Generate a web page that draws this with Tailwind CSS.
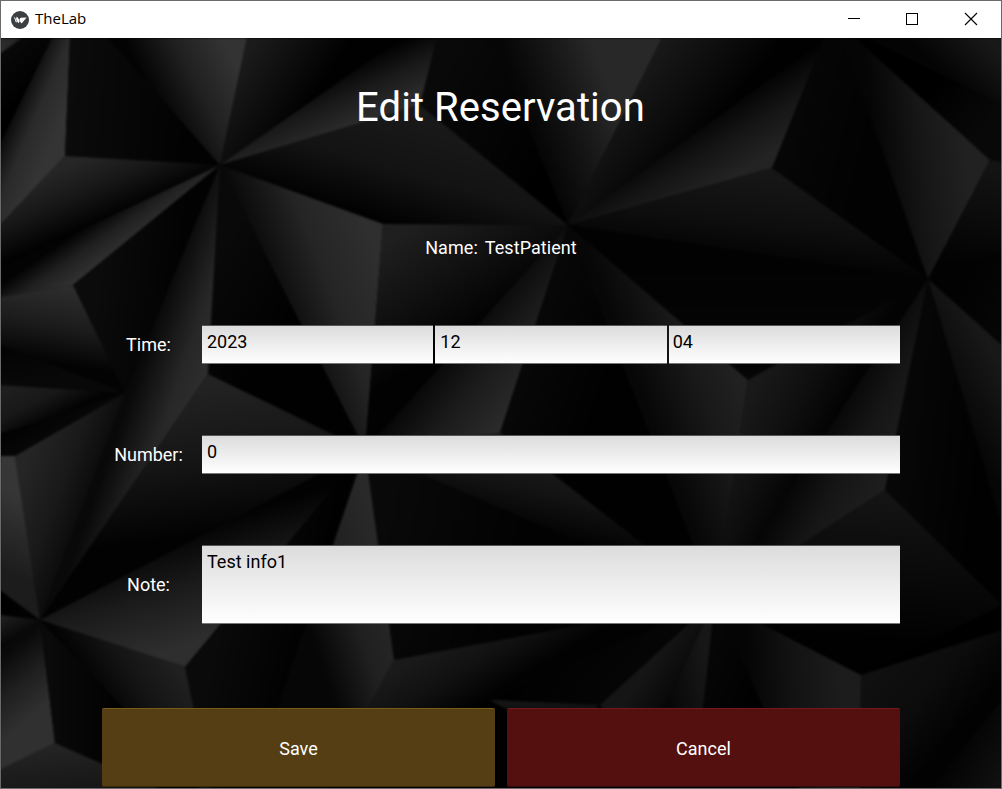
<!DOCTYPE html>
<html lang="en">
<head>
<meta charset="utf-8">
<title>TheLab</title>
<script src="https://cdn.jsdelivr.net/npm/@tailwindcss/browser@4"></script>
</head>
<body class="overflow-hidden bg-black">
<div class="relative flex h-[789px] w-[1002px] flex-col overflow-hidden border border-[#6b6b6b] bg-black font-[Roboto,sans-serif] text-[18px] leading-[22px] text-white">
  <svg class="absolute -top-px -left-px h-[789px] w-[1002px]" viewBox="0 0 1002 789" aria-hidden="true">
    <defs><filter id="soft" x="0" y="0" width="100%" height="100%" color-interpolation-filters="sRGB"><feGaussianBlur stdDeviation="1.3"/></filter></defs>
    <g id="facets" filter="url(#soft)"></g>
  </svg>

  <header class="relative flex h-[37px] shrink-0 items-center bg-white text-black">
    <svg class="ml-[10px] size-[18px]" viewBox="0 0 18 18"><circle cx="9" cy="9" r="9" fill="#3c3f42"/><path d="M2.600 5.200 4.900 8.100 5.900 5.600 8.300 8.700 9.500 6.800 15.600 6.600 10.600 12.400 8.700 10 7.800 12.300 5.900 10.300 5.100 12Z" fill="#fff"/><path d="M4.900 8.100 5.900 10.300M8.300 8.700 8.700 10" stroke="#3c3f42" stroke-width=".5"/></svg>
    <span class="mb-[3px] ml-[6px] font-['Open_Sans',sans-serif] text-[15px] leading-5">TheLab</span>
    <div class="ml-auto flex items-center">
      <svg class="h-[37px] w-[58px]" viewBox="0 0 58 37" fill="none" stroke="#000" shape-rendering="crispEdges"><path d="M23 17.500H35"/></svg>
      <svg class="h-[37px] w-[59px]" viewBox="0 0 59 37" fill="none" stroke="#000" shape-rendering="crispEdges"><path d="M23.500 12.500H34.500V23.500H23.500Z"/></svg>
      <svg class="h-[37px] w-[59px]" viewBox="0 0 59 37" fill="none" stroke="#000" stroke-width="1.100"><path d="M23 12 35 24M35 12 23 24"/></svg>
    </div>
  </header>

  <main class="relative flex grow flex-col px-[101px]">
    <h1 class="mt-[46px] mr-px text-center text-[40px] leading-[47px] font-normal tracking-[0.06px]">Edit Reservation</h1>
    <div class="mt-[106px] flex justify-center gap-[7px] tracking-[0.06px]"><span>Name:</span><span>TestPatient</span></div>

    <div class="mt-[66px] flex h-[39px] items-center">
      <label class="w-[93px] shrink-0 text-center">Time:</label>
      <div class="ml-[7px] grid h-full grow grid-cols-3 gap-[2px] text-black">
        <div class="border-y border-t-[#555] border-b-[#777] bg-linear-to-b from-[#dcdcdc] to-white px-[5px] pt-[5px]">2023</div>
        <div class="border-y border-t-[#555] border-b-[#777] bg-linear-to-b from-[#dcdcdc] to-white px-[5px] pt-[5px]">12</div>
        <div class="border-y border-t-[#555] border-b-[#777] bg-linear-to-b from-[#dcdcdc] to-white px-[4px] pt-[5px]">04</div>
      </div>
    </div>

    <div class="mt-[71px] flex h-[39px] items-center">
      <label class="w-[93px] shrink-0 text-center">Number:</label>
      <div class="ml-[7px] h-full grow border-y border-t-[#555] border-b-[#777] bg-linear-to-b from-[#dcdcdc] to-white px-[5px] pt-[5px] text-black">0</div>
    </div>

    <div class="mt-[71px] flex h-[79px] items-center">
      <label class="w-[93px] shrink-0 text-center">Note:</label>
      <div class="ml-[7px] h-full grow border-y border-t-[#555] border-b-[#777] bg-linear-to-b from-[#dcdcdc] to-white px-[5px] pt-[5px] text-black">Test info1</div>
    </div>

    <div class="mt-[84px] grid h-[79px] grid-cols-2 gap-3">
      <button class="rounded-[2px] border-y border-t-[#795a1a] border-b-[#3a2b0e] bg-[#553e13] pt-[2px]">Save</button>
      <button class="rounded-[2px] border-y border-t-[#79181a] border-b-[#390a0b] bg-[#540f0f] pt-[2px]">Cancel</button>
    </div>
  </main>
</div>
<script>
// Facets of the backdrop: corner points, gradient start and end, colour stops from start to end.
const facets = [
  ["0,38 22,38 0,54", 0,54, 22,38, "#303030","#202020"],
  ["22,38 54,38 0,150 0,54", 0,60, 30,90, "#080808","#000"],
  ["52,38 70,38 65,156 0,225 0,144", 15,100, 62,120, "#050505","#2a2a2a","#343434"],
  ["70,38 108,38 220,165 65,156", 70,100, 190,110, "#0b0b0b","#020202"],
  ["108,38 247,38 220,165", 160,110, 238,70, "#030303","#202020","#333"],
  ["247,38 402,38 220,165", 235,70, 300,115, "#1b1b1b","#0e0e0e","#010101"],
  ["402,38 437,38 420,105 220,165", 340,70, 362,118, "#020202","#191919","#2a2a2a"],
  ["220,165 420,105 568,225 383,224", 400,115, 370,218, "#191919","#131313","#010101"],
  ["437,38 493,38 568,225 420,105", 440,80, 560,150, "#090909","#000"],
  ["493,38 662,38 568,225", 530,120, 610,90, "#060606","#161616","#282828"],
  ["662,38 845,25 568,225", 650,60, 720,118, "#181818","#0d0d0d","#010101"],
  ["568,225 845,25 772,168", 700,118, 735,175, "#020202","#151515","#232323"],
  ["568,225 772,168 928,279", 740,175, 730,265, "#161616","#0e0e0e","#010101"],
  ["824,38 846,25 928,279 772,168", 790,150, 870,170, "#060606","#020202"],
  ["843,38 858,38 990,160 928,279", 875,150, 965,140, "#050505","#161616","#212121"],
  ["855,38 1002,103 1002,162 990,160", 930,90, 980,130, "#000","#080808"],
  ["866,38 1002,38 1002,104", 985,40, 950,78, "#181818","#040404"],
  ["990,160 1002,162 1002,250 928,279", 985,170, 965,268, "#131313","#020202"],
  ["65,156 220,165 0,268 0,225", 80,160, 105,218, "#262626","#171717","#020202"],
  ["0,268 220,165 73,285 0,297", 80,230, 102,262, "#030303","#202020","#303030"],
  ["220,165 73,285 125,393", 100,270, 180,280, "#0b0b0b","#020202"],
  ["220,165 383,224 365,450", 275,300, 380,260, "#0a0a0a","#252525","#2f2f2f"],
  ["220,165 208,374 365,450", 210,270, 290,320, "#090909","#010101"],
  ["220,165 208,374 40,620 125,393", 138,373, 215,400, "#090909","#272727","#323232"],
  ["383,224 568,225 365,450", 390,240, 455,340, "#1f1f1f","#111","#020202"],
  ["568,225 365,450 500,433", 445,345, 520,405, "#050505","#1b1b1b","#2b2b2b"],
  ["568,225 500,433 715,600", 520,350, 610,380, "#080808","#010101"],
  ["568,225 748,380 715,600", 640,390, 745,350, "#070707","#191919","#242424"],
  ["568,225 928,279 748,380", 740,250, 740,380, "#020202","#060606"],
  ["928,279 748,380 715,600", 745,405, 820,445, "#191919","#101010","#030303"],
  ["928,279 715,600 885,490", 820,435, 890,475, "#060606","#161616","#1e1e1e"],
  ["928,279 885,490 1002,605 1002,520", 900,430, 985,440, "#070707","#010101"],
  ["928,279 1002,345 1002,525", 950,400, 1002,370, "#060606","#181818"],
  ["928,279 1002,250 1002,345", 960,280, 1000,300, "#020202","#050505"],
  ["0,297 73,285 125,393 0,345", 60,287, 48,362, "#2d2d2d","#1c1c1c","#030303"],
  ["0,345 125,393 0,385", 0,345, 5,383, "#030303","#080808"],
  ["0,385 125,393 0,434", 20,385, 40,425, "#1e1e1e","#181818","#030303"],
  ["0,434 125,393 15,456 0,456", 20,425, 35,450, "#020202","#080808"],
  ["15,456 125,393 40,620", 30,450, 108,480, "#252525","#191919","#060606"],
  ["0,456 15,456 40,620 0,592", 0,570, 30,500, "#1c1c1c","#363636"],
  ["208,374 365,450 40,620", 220,385, 240,530, "#222","#151515","#020202"],
  ["365,450 40,620 185,667", 210,522, 242,628, "#020202","#1b1b1b","#2e2e2e"],
  ["365,450 500,433 715,600", 490,435, 470,520, "#1e1e1e","#131313","#010101"],
  ["365,450 715,600 394,660", 380,550, 520,580, "#090909","#020202"],
  ["365,450 394,660 325,789 250,789", 310,630, 400,600, "#060606","#202020","#292929"],
  ["365,450 250,789 210,789 185,667", 210,670, 295,690, "#0a0a0a","#010101"],
  ["0,590 40,620 0,615", 0,590, 20,615, "#000","#020202"],
  ["0,615 40,620 0,652", 0,615, 14,642, "#222","#040404"],
  ["0,650 40,620 55,743 0,770", 10,650, 52,700, "#090909","#1f1f1f","#303030"],
  ["0,770 55,743 160,789 0,789", 55,743, 60,789, "#252525","#171717"],
  ["40,620 200,789 160,789 55,743", 50,700, 120,700, "#0a0a0a","#010101"],
  ["40,620 185,667 210,789 200,789", 175,665, 108,712, "#202020","#141414","#020202"],
  ["394,660 715,600 490,700 400,740 325,789", 420,655, 455,715, "#1a1a1a","#111","#020202"],
  ["490,700 715,600 600,705", 540,650, 600,700, "#010101","#050505"],
  ["490,700 600,705 560,740", 500,700, 500,718, "#181818","#080808"],
  ["715,600 600,705 640,760", 640,680, 680,708, "#151515","#040404"],
  ["715,600 640,760 703,708", 655,680, 708,670, "#040404","#171717"],
  ["715,600 703,708 800,789", 710,660, 760,680, "#060606","#010101"],
  ["715,600 800,789 860,789 861,675", 748,665, 840,660, "#050505","#131313","#1c1c1c"],
  ["715,600 885,490 1002,605 861,675", 880,495, 870,640, "#141414","#0a0a0a","#010101"],
  ["861,675 1002,630 1002,789 861,789", 870,680, 945,745, "#101010","#0c0c0c","#020202"],
  ["1002,700 1002,789 930,789", 950,750, 1000,780, "#020202","#101010"]
];
const ns = "http://www.w3.org/2000/svg";
const group = document.getElementById("facets");
const add = (parent, tag, attrs) => {
  const el = document.createElementNS(ns, tag);
  for (const k in attrs) el.setAttribute(k, attrs[k]);
  return parent.appendChild(el);
};
facets.forEach(([points, x1, y1, x2, y2, ...stops], i) => {
  const g = add(group, "linearGradient", { id: "g" + i, gradientUnits: "userSpaceOnUse", x1, y1, x2, y2 });
  stops.forEach((c, n) => add(g, "stop", { offset: n / (stops.length - 1), "stop-color": c }));
  add(group, "polygon", { points, fill: `url(#g${i})` });
});
</script>
</body>
</html>
